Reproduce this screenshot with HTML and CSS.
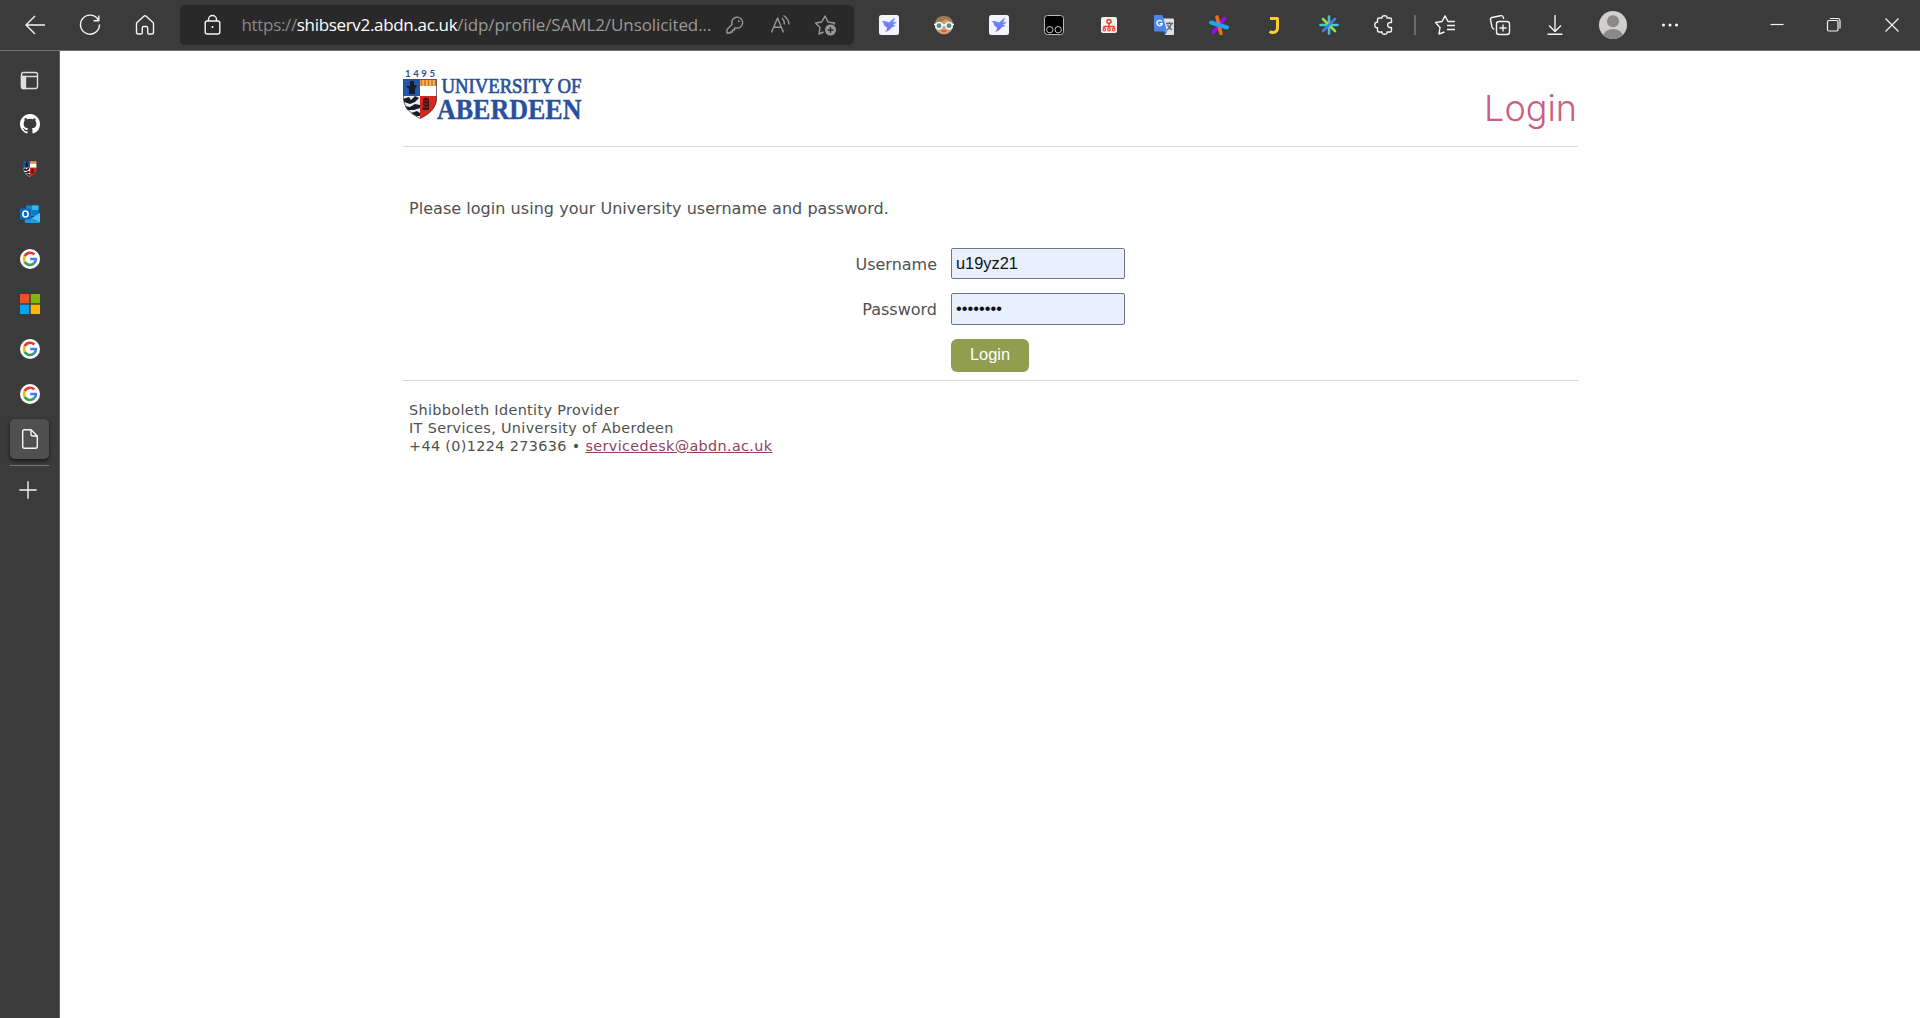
FILE: index.html
```html
<!DOCTYPE html>
<html lang="en">
<head>
<meta charset="utf-8">
<title>University of Aberdeen Login</title>
<link rel="stylesheet" href="styles.css">
</head>
<body>
<svg class="defs" width="0" height="0" aria-hidden="true">
  <linearGradient id="bird-fill" x1="0" y1="0" x2="0" y2="1"><stop offset="0" stop-color="#5b9cff"/><stop offset="1" stop-color="#8a62f0"/></linearGradient>
  <symbol id="bird" viewBox="0 0 20 20">
    <rect width="20" height="20" rx="2.500" fill="#f2f4ff"/>
    <path d="M2.500 6.200L5 6Q8 6.300 10 7.500Q12.500 5 16 2.500Q15.500 5 14 7.500L18 6.800Q16 9 13.500 10L17 10.800Q14 12 12.500 12.500Q10.500 16 6 16.800Q8.500 14.500 8 12.500Q5 11.500 4.500 7.800Z" fill="url(#bird-fill)"/>
  </symbol>
  <symbol id="google" viewBox="0 0 20 20">
    <circle cx="10" cy="10" r="10" fill="#fff"/>
    <g fill="none" stroke-width="2.600">
      <path d="M14.300 5.500A6 6 0 0 0 4.700 7.200" stroke="#e33b2e"/>
      <path d="M4.700 7.200A6 6 0 0 0 4.700 12.800" stroke="#f9bb06"/>
      <path d="M4.700 12.800A6 6 0 0 0 13.800 14.600" stroke="#31a350"/>
      <path d="M13.800 14.600A6 6 0 0 0 16 10H10.200" stroke="#3f7fee"/>
    </g>
  </symbol>
  <symbol id="crest" viewBox="0 0 34 40">
    <clipPath id="shield"><path d="M0 0H34V19Q34 32 17 40Q0 32 0 19Z"/></clipPath>
    <g clip-path="url(#shield)">
      <path d="M0 0H17V17H0Z" fill="#2358a6"/>
      <path d="M17 0H34V7H17Z" fill="#f5be4d"/>
      <path d="M18.500 0V7M22 0V7M25.500 0V7M29 0V7M32.500 0V7" stroke="#e0603b" stroke-width="1.500"/>
      <path d="M17 7H34V17H17Z" fill="#fff"/>
      <path d="M0 17H17V40H0Z" fill="#eee"/>
      <path d="M17 17H34V40H17Z" fill="#d9271f"/>
      <path d="M7 2H11V6H14L12 10V15H6V10L3 7H7ZM0 20L6 18L8 21L12 17L16 19L12 23L7 25L1 23ZM1 27L7 28L12 25L17 26V29L11 31L4 31ZM8 34L14 32L17 34V37H13Z" fill="#171c2a"/>
      <path d="M20 20Q23 17 26 20V31H19L20.500 28Z" fill="#371619"/>
      <path d="M21 22H25M21 25H25M21 28H25" stroke="#a9231f"/>
    </g>
    <path d="M.5 .5H33.500V19Q33.500 31.500 17 39.400Q.5 31.500 .5 19Z" fill="none" stroke="#4b4450" stroke-width=".8"/>
  </symbol>
</svg>

<header class="toolbar">
  <nav class="nav">
    <svg class="icon" viewBox="0 0 20 20"><path d="M10 1L1 10L10 19M1 10H20"/></svg>
    <svg class="icon" viewBox="0 0 20 20"><path d="M18.300 5A9.500 9.500 0 1 0 19.500 9.500M18.800 .5V5.800H13.500"/></svg>
    <svg class="icon" viewBox="0 0 20 20"><path d="M1.500 8.700Q1.500 8 2 7.500L8.800 1.200Q10 .2 11.200 1.200L18 7.500Q18.500 8 18.500 8.700V17.500Q18.500 19 17 19H14Q12.700 19 12.700 17.700V13Q12.700 11.500 11.200 11.500H8.800Q7.300 11.500 7.300 13V17.700Q7.300 19 6 19H3Q1.500 19 1.500 17.500Z"/></svg>
  </nav>
  <div class="address">
    <svg class="icon lock" viewBox="0 0 20 20"><rect x="3.200" y="6" width="14.600" height="13" rx="2"/><path d="M6.500 6V4.500A4 4 0 0 1 14.500 4.500V6"/><circle cx="10.500" cy="12" r="1" fill="#fff" stroke="none"/></svg>
    <span class="url"><span class="scheme">https://</span><span class="host">shibserv2.abdn.ac.uk</span><span class="path">/idp/profile/SAML2/Unsolicited...</span></span>
    <span class="tools">
      <svg class="icon" viewBox="0 0 20 20"><path d="M7 9.500A5.500 5.500 0 1 1 11 13H9.500V15H7.500V17H5.500V18H2V14.500Z"/><circle cx="13.700" cy="6.300" r="1" fill="#999" stroke="none"/></svg>
      <svg class="icon" viewBox="0 0 20 20"><path d="M1.500 17.500L7.500 3L13.500 17.500M3.500 12.300H11.500M12 3Q14.500 5.500 14.500 9.500M13.500 .5Q19 4 19 9.500"/></svg>
      <svg class="icon star" viewBox="0 0 20 20"><path d="M8.500 17L4 19L5 12.500L.5 8L6.700 7L10 1L13 7L19.500 8L18.500 9.500"/><circle cx="15.500" cy="15" r="5.500" fill="#999" stroke="none"/><path d="M15.500 12V18M12.500 15H18.500" class="knockout"/></svg>
    </span>
  </div>
  <div class="extensions">
    <svg class="icon"><use href="#bird"/></svg>
    <svg class="icon plain" viewBox="0 0 20 20"><circle cx="10" cy="10.500" r="9" fill="#d59a78"/><path d="M1 10Q1 1 10 1Q19 1 19 10Q16 7 12 4Q7 8 1 10Z" fill="#a17c50"/><g fill="#4f8c91" stroke="#f2f2ee" stroke-width="1.700"><circle cx="5" cy="10.700" r="3.200"/><circle cx="15" cy="10.700" r="3.200"/></g><path d="M8 10H12M0 9.500H2M18 9.500H20" stroke="#fff"/><path d="M7.500 16H12.500" stroke="#b14d41" stroke-width="1.300"/></svg>
    <svg class="icon"><use href="#bird"/></svg>
    <svg class="icon" viewBox="0 0 20 20"><rect x=".5" y=".5" width="19" height="19" rx="3" fill="#000" stroke="#bbb" stroke-width="1"/><g stroke="#ccc" stroke-width="1"><circle cx="5.800" cy="14.700" r="3.200"/><circle cx="14.200" cy="14.700" r="3.200"/></g></svg>
    <svg class="icon plain" viewBox="0 0 20 20"><rect x="2" y="2" width="16" height="16" rx="2" fill="#f5f2f1"/><path d="M10 8V13M5 14V11.500H15V14" stroke="#e5492d" stroke-width="1.500" fill="none"/><circle cx="10" cy="6.500" r="2.800" fill="#e5492d"/><path d="M8.800 7L11 6" stroke="#fff"/><g fill="#fff" stroke="#e5492d" stroke-width="1.200"><circle cx="5.300" cy="14.500" r="1.300"/><circle cx="10" cy="14.500" r="1.300"/><circle cx="14.700" cy="14.500" r="1.300"/></g></svg>
    <svg class="icon plain" viewBox="0 0 20 20"><path d="M7 3.500H19Q20 3.500 20 4.500V19Q20 20 19 20H11Z" fill="#dce0e3"/><path d="M12 8.500H19M15.500 7V8.500M17.500 8.500Q16.500 12.500 13 15M13.500 10Q15 13 18 15" stroke="#5c6973" fill="none"/><path d="M1 0H8.500L13 16.500H1Q0 16.500 0 15.500V1Q0 0 1 0Z" fill="#4b87e9"/><path d="M9.500 16.500H13L11 20Z" fill="#3162bd"/><path d="M8 6.700A2.700 2.700 0 1 0 8.300 8.600H5.800" fill="none" stroke="#fff" stroke-width="1.400"/></svg>
    <svg class="icon plain" viewBox="0 0 20 20"><g stroke-width="3.600" stroke-linecap="round"><path d="M15.500 3.500L4.500 17" stroke="#9c0cf0"/><path d="M8 2L12 18.500" stroke="#f26a20"/></g><path d="M2 7.500L18 12.500" stroke="#17a8ec" stroke-width="4" stroke-linecap="round"/></svg>
    <svg class="icon plain" viewBox="0 0 20 20"><path d="M6 3.500H13.500V12.500Q13.500 17.500 9 17.500Q7 17.500 5.500 16.500" fill="none" stroke="#f7cf35" stroke-width="3"/></svg>
    <svg class="icon plain" viewBox="0 0 20 20"><g stroke-width="2.600" stroke-linecap="round"><path d="M10 1.500V18.500" stroke="#4bbbd5"/><path d="M1.500 10H18.500" stroke="#45cad0"/><path d="M4 4L16 16" stroke="#93df4b"/><path d="M16 4L4 16" stroke="#477be3"/></g></svg>
    <svg class="icon" viewBox="0 0 20 20"><path d="M5 3H8Q7.700 .7 10.500 .7Q13.300 .7 13 3H16Q17.500 3 17.500 4.500V7.500Q13.700 7 13.700 10Q13.700 13 17.500 12.500V15.500Q17.500 17 16 17H13Q13.300 19.300 10.500 19.300Q7.700 19.300 8 17H5Q3.500 17 3.500 15.500V12.800Q.8 13 .8 10Q.8 7 3.500 7.200V4.500Q3.500 3 5 3Z"/></svg>
  </div>
  <i class="divider"></i>
  <div class="actions">
    <svg class="icon" viewBox="0 0 20 20"><path d="M9.500 17L4 19L5 12.500L.5 7.500L7 6.500L10 .8L13 6.500H20M12 10.500H20M12 14.500H20"/></svg>
    <svg class="icon" viewBox="0 0 20 20"><rect x="6.500" y="6.500" width="13" height="13" rx="2.500"/><path d="M13 9.500V16.500M9.500 13H16.500M4.300 14.500Q2.500 13.500 2 12L.5 5Q.2 3 2 2.500L10.500 .7Q12.800 .3 13.300 2.300L13.700 4"/></svg>
    <svg class="icon" viewBox="0 0 20 20"><path d="M10 0V16M4 10.500L10 16.500L16 10.500M2.500 19.300H17.500"/></svg>
  </div>
  <svg class="avatar" viewBox="0 0 28 28"><clipPath id="face"><circle cx="14" cy="14" r="14"/></clipPath><g clip-path="url(#face)"><path d="M0 0H28V28H0Z" fill="#d0cfcb"/><circle cx="14" cy="10.300" r="6" fill="#8b8987"/><ellipse cx="14" cy="26" rx="10" ry="8" fill="#8b8987"/></g></svg>
  <svg class="icon more" viewBox="0 0 20 20"><g fill="#fff" stroke="none"><circle cx="3.500" cy="10" r="1.500"/><circle cx="10" cy="10" r="1.500"/><circle cx="16.500" cy="10" r="1.500"/></g></svg>
  <div class="window-controls">
    <svg class="icon" viewBox="0 0 20 20"><path d="M3.500 9.500H16.500"/></svg>
    <svg class="icon" viewBox="0 0 20 20"><rect x="3.500" y="5.500" width="10.500" height="10.500" rx="1.500"/><path d="M6 3.500H13.500Q16 3.500 16 6V13.500"/></svg>
    <svg class="icon" viewBox="0 0 20 20"><path d="M3.500 3.500L16.500 16.500M16.500 3.500L3.500 16.500"/></svg>
  </div>
</header>

<div class="body">
  <aside class="sidebar">
    <div class="tab"><svg class="icon pane" viewBox="0 0 20 20"><rect x="1.500" y="3.500" width="16" height="16" rx="2"/><path d="M1.500 7.500H17.500"/><path d="M1.500 7.500H5.500V19.500H3Q1.500 19.500 1.500 18Z" fill="#ddd"/></svg></div>
    <div class="tab"><svg class="icon plain" viewBox="0 0 16 16"><path fill="#fff" d="M8 0C3.580 0 0 3.580 0 8c0 3.540 2.290 6.530 5.470 7.590.4.070.55-.17.55-.38 0-.19-.01-.82-.01-1.490-2.010.37-2.530-.49-2.690-.94-.09-.23-.48-.94-.82-1.130-.28-.15-.68-.52-.01-.53.63-.01 1.080.58 1.230.82.72 1.210 1.870.87 2.330.66.07-.52.28-.87.51-1.070-1.780-.2-3.640-.89-3.640-3.950 0-.87.31-1.590.82-2.150-.08-.2-.36-1.020.08-2.120 0 0 .67-.21 2.200.82A7.600 7.600 0 0 1 8 3.870c.68 0 1.360.09 2 .27 1.530-1.040 2.200-.82 2.200-.82.44 1.100.16 1.920.08 2.120.51.56.82 1.270.82 2.150 0 3.070-1.870 3.750-3.650 3.950.29.25.54.73.54 1.480 0 1.070-.01 1.930-.01 2.200 0 .21.150.46.55.38A8.010 8.010 0 0 0 16 8c0-4.420-3.580-8-8-8z"/></svg></div>
    <div class="tab"><svg class="crest-small"><use href="#crest"/></svg></div>
    <div class="tab"><svg class="icon plain" viewBox="0 0 20 20"><path d="M6 1.500H18.500V12H6Z" fill="#1287d5"/><path d="M12 1.500H18.500V6H12Z" fill="#36b5f0"/><path d="M12 6H18.500V11H12Z" fill="#087acb"/><path d="M4 9L12 14L20 9V18Q20 19 19 19H5Z" fill="#1c9ee5"/><path d="M12 14L20 9V18Z" fill="#4ac5f5"/><rect y="4.500" width="11" height="11" rx="1" fill="#086bbd"/><ellipse cx="5.500" cy="10" rx="2.600" ry="3" fill="none" stroke="#fff" stroke-width="1.600"/></svg></div>
    <div class="tab"><svg class="icon"><use href="#google"/></svg></div>
    <div class="tab"><svg class="icon plain" viewBox="0 0 20 20"><path d="M0 0H9.300V9.300H0Z" fill="#f04e24"/><path d="M10.700 0H20V9.300H10.700Z" fill="#7db900"/><path d="M0 10.700H9.300V20H0Z" fill="#08a3ed"/><path d="M10.700 10.700H20V20H10.700Z" fill="#fdb803"/></svg></div>
    <div class="tab"><svg class="icon"><use href="#google"/></svg></div>
    <div class="tab"><svg class="icon"><use href="#google"/></svg></div>
    <div class="tab active"><svg class="icon" viewBox="0 0 20 20"><path d="M4.500 .7H11L17.300 7V17.500Q17.300 19.300 15.500 19.300H4.500Q2.700 19.300 2.700 17.500V2.500Q2.700 .7 4.500 .7ZM11 .7V5.500Q11 7 12.500 7H17.300"/></svg></div>
    <div class="new-tab"><svg class="icon" viewBox="0 0 20 20"><path d="M10 1.300V18.700M1.300 10H18.700"/></svg></div>
  </aside>

  <main class="page">
    <div class="masthead">
      <svg class="logo" viewBox="0 0 180 54" role="img" aria-label="University of Aberdeen">
        <g fill="#27519b" font-family="Lato, sans-serif">
          <text x="2" y="8" font-size="9.500" font-weight="700" textLength="30">1495</text>
          <g font-family="'Liberation Serif', serif" stroke="#27519b">
            <text x="38.500" y="23.500" font-size="20.500" stroke-width=".7" textLength="140" lengthAdjust="spacingAndGlyphs">UNIVERSITY OF</text>
            <text x="34" y="49.500" font-size="30" font-weight="700" stroke-width=".4" textLength="144.500" lengthAdjust="spacingAndGlyphs">ABERDEEN</text>
          </g>
        </g>
        <use href="#crest" x="0" y="10" width="34" height="40"/>
      </svg>
      <h1>Login</h1>
    </div>
    <p class="intro">Please login using your University username and password.</p>
    <form class="login">
      <label for="user">Username</label><input id="user" type="text" value="u19yz21">
      <label for="pass">Password</label><input id="pass" type="password" value="password">
      <button type="button">Login</button>
    </form>
    <footer>Shibboleth Identity Provider<br>IT Services, University of Aberdeen<br>+44 (0)1224 273636 • <a href="#">servicedesk@abdn.ac.uk</a></footer>
  </main>
</div>
</body>
</html>
```
FILE: styles.css
```css
* { box-sizing: border-box; }
body { margin: 0; height: 1018px; overflow: hidden; background: #fff; font-family: Verdana, "DejaVu Sans", sans-serif; color: #505050; display: flex; flex-direction: column; }
.defs { position: absolute; }
.icon { width: 20px; height: 20px; flex: none; display: block; overflow: visible; fill: none; stroke: #f4f4f4; stroke-width: 1.4; stroke-linejoin: round; }
.plain { stroke: none; }
.icon use { stroke: none; }

.toolbar { height: 51px; flex: none; background: #3b3b3b; border-bottom: 1px solid #737373; display: flex; align-items: center; }
.nav { display: flex; gap: 35px; padding-left: 25px; width: 180px; }
.address { width: 674px; height: 40px; border-radius: 5px; background: #292929; display: flex; align-items: center; padding-left: 22px; }
.url { margin-left: 19.5px; width: 483.5px; white-space: nowrap; font: 17px/24px "Open Sans", sans-serif; letter-spacing: -0.33px; color: #999; }
.scheme { color: #888; }
.host { color: #fff; }
.path { letter-spacing: -0.09px; }
.tools { display: flex; gap: 25px; }
.tools .icon { stroke: #999; }
.tools .knockout { stroke: #292929; }
.extensions { display: flex; gap: 35px; margin-left: 25px; }
.divider { width: 2px; height: 20px; background: #6a6a6a; margin-left: 20px; }
.actions { display: flex; gap: 35px; margin-left: 19px; }
.avatar { width: 28px; height: 28px; margin-left: 34px; }
.more { margin-left: 33px; }
.window-controls { display: flex; gap: 37.5px; margin-left: 86.5px; }
.window-controls .icon { stroke-width: 1.2; }

.body { flex: 1; display: flex; min-height: 0; }
.sidebar { width: 60px; flex: none; background: #3b3b3b; border-right: 1px solid #666; padding: 8px 10px 0; display: flex; flex-direction: column; gap: 5px; }
.sidebar::before { content: ""; height: 1px; flex: none; background: #737373; margin: -9px 0 3px; width: 39px; }
.tab { height: 40px; width: 39px; flex: none; display: grid; place-items: center; }
.pane { stroke: #ddd; }
.crest-small { width: 14px; height: 16px; }
.active { background: #505050; border-radius: 5px; box-shadow: 0 2px 4px rgba(0, 0, 0, .6); }
.new-tab { width: 39px; border-top: 1px solid #777; padding: 14px 0 0 8px; margin-top: 1px; }

.page { width: 1175px; margin-left: 343px; }
.masthead { height: 96px; border-bottom: 1px solid #d8d8d8; display: flex; justify-content: space-between; }
.logo { width: 180px; height: 54px; margin-top: 18px; overflow: visible; }
h1 { margin: 35px 1px 0 0; font: 300 36px/44px Inter, sans-serif; letter-spacing: 0; color: #c8607f; }
.intro { margin: 51px 6px 0; font-size: 16px; line-height: 22px; letter-spacing: .04px; }
.login { display: grid; grid-template-columns: 534px 174px; column-gap: 14px; grid-template-rows: 31px 32px 33px; row-gap: 14px; margin-top: 28px; height: 133px; border-bottom: 1px solid #d8d8d8; }
.login label { text-align: right; font-size: 16px; line-height: 34px; }
.login input { width: 174px; height: 100%; border: 1px solid #72757d; border-radius: 2px; background: #e8f0fe; padding: 0 4px 1px; font: 16.4px "Liberation Sans", Arial, sans-serif; color: #111; outline: none; }
.login button { grid-column: 2; width: 78px; border: 0; border-radius: 6px; background: #919d4f; color: #fff; font: 16.4px "Liberation Sans", Arial, sans-serif; padding: 0 0 2px; }
footer { margin: 20px 6px; font-size: 14.4px; line-height: 18px; letter-spacing: .35px; }
footer a { color: #92415e; }
```
